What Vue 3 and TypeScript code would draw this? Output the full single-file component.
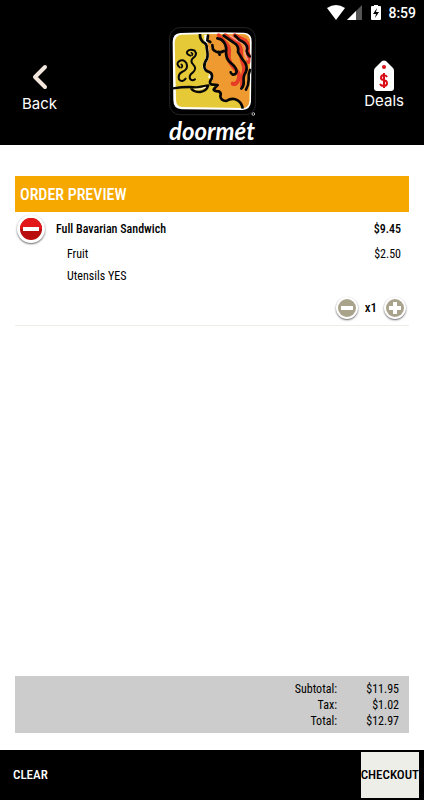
<script setup lang="ts">
import { computed, ref } from 'vue'

interface Line {
  name: string
  price?: number
}

const item = { name: 'Full Bavarian Sandwich', price: 9.45 }
const options: Line[] = [{ name: 'Fruit', price: 2.5 }, { name: 'Utensils YES' }]
const quantity = ref(1)
const present = ref(true)

const money = (value: number): string => '$' + value.toFixed(2)
const subtotal = computed(() => (present.value ? 11.95 * quantity.value : 0))
const tax = computed(() => Math.round(subtotal.value * 8.5) / 100)
const totals = computed(() => [
  { label: 'Subtotal:', value: subtotal.value },
  { label: 'Tax:', value: tax.value },
  { label: 'Total:', value: subtotal.value + tax.value },
])

function change(step: number) {
  quantity.value = Math.max(1, quantity.value + step)
}
</script>

<template>
  <div class="screen">
    <header class="header">
      <div class="status">
        <svg width="18" height="15" viewBox="0 0 18 15" aria-hidden="true">
          <path d="M0 3Q9-3 18 3L9 15Z" fill="#fff" />
        </svg>
        <svg class="signal" width="15" height="15" viewBox="0 0 15 15" aria-hidden="true">
          <path d="M15 0V15H0Z" fill="#555" />
          <path d="M9 6V15H0Z" fill="#fff" />
        </svg>
        <svg class="battery" width="10" height="15" viewBox="0 0 10 15" aria-hidden="true">
          <path d="M3 0H7V1H9Q10 1 10 2V14Q10 15 9 15H1Q0 15 0 14V2Q0 1 1 1H3Z" fill="#fff" />
          <path d="M6 3L2 9H5L4 13L8 7H5Z" fill="#000" />
        </svg>
        <span class="clock">8:59</span>
      </div>
      <nav class="nav">
        <a class="link back" href="#back">
          <svg width="16" height="26" viewBox="0 0 16 26" aria-hidden="true">
            <path d="M13 3L3 13L13 23" fill="none" stroke="#f3e6dd" stroke-width="4" stroke-linecap="round" stroke-linejoin="round" />
          </svg>
          <span>Back</span>
        </a>
        <div class="brand">
          <svg class="mark" width="90" height="90" viewBox="21 13 270 270" aria-hidden="true">
            <rect x="29" y="18" width="257" height="261" rx="30" fill="#000" stroke="#242424" stroke-width="3" />
            <path d="M61 34Q150 30 252 33Q277 35 275 61L273 240Q271 263 248 265L65 263Q40 262 40 236L38 60Q39 35 61 34Z" fill="#fff" />
            <path d="M64 39Q148 36 250 38Q270 39 270 60L268 238Q267 258 248 259L68 256Q48 255 48 234L44 62Q45 42 64 39Z" fill="#e6c936" />
            <path d="M145 38H251Q270 40 270 60L268 238Q267 258 248 259Q245 248 232 239Q216 229 203 238Q186 240 181 227Q184 216 179 211Q166 211 164 201Q173 193 171 188L155 181Q163 164 157 154L139 143Q136 137 140 124Q148 109 146 91Q139 67 145 38Z" fill="#ee9a31" />
            <path d="M137 40Q136 65 142 88Q145 108 135 123Q129 142 139 146M148 158Q151 158 149 170" fill="none" stroke="#fff" stroke-width="9" />
            <path d="M120 37Q119 51 129 61Q141 66 140 79Q145 100 141 111Q132 124 133 135Q134 148 148 151Q159 156 155 171Q146 182 153 188L173 190Q164 198 161 204Q164 210 177 209Q185 214 181 224Q183 237 199 238Q217 226 233 236Q246 244 248 261" fill="none" stroke="#050505" stroke-width="8" stroke-linejoin="round" />
            <g fill="none" stroke-linecap="round" stroke-linejoin="round">
              <g stroke="#e63d27" stroke-width="12">
                <path d="M176 41Q187 54 199 66Q209 77 207 93Q204 109 211 124Q223 140 233 151Q242 164 233 179Q226 190 218 186" />
                <path d="M196 41Q211 54 225 59Q245 71 243 94Q243 112 250 129Q255 139 249 160Q246 176 246 193" />
                <path d="M224 41Q239 50 256 57Q267 69 263 87Q268 103 265 121" />
              </g>
              <path d="M211 43Q230 58 247 63Q259 71 255 89Q253 98 263 114" stroke="#f8a098" stroke-width="4" />
              <g stroke="#080808" stroke-width="8">
                <path d="M172 50Q185 51 192 62Q201 76 198 93Q198 108 207 119L223 134Q235 149 226 157Q216 162 212 152" />
                <path d="M191 42Q209 55 221 63Q238 72 234 91Q240 101 248 114Q265 131 258 150Q249 163 251 179Q252 193 244 201" />
                <path d="M225 42Q237 56 251 62Q266 73 260 88Q262 98 269 104" />
                <path d="M270 145Q264 158 266 174Q266 190 258 204" />
                <path d="M144 42L142 56L151 61M157 70L159 83Q173 98 192 88M176 91L179 99" />
              </g>
              <path d="M59 137Q47 127 57 119Q69 110 79 124Q87 143 66 151Q53 158 57 173Q66 184 77 171" stroke="#080808" stroke-width="6" />
              <path d="M91 102Q77 97 82 89Q90 80 104 87Q114 100 98 110Q90 119 100 129Q112 140 98 153Q85 162 91 173Q98 179 105 173" stroke="#080808" stroke-width="6" />
              <path d="M94 93Q100 95 96 101M64 128Q70 133 64 138" stroke="#080808" stroke-width="5" />
              <path d="M39 200Q78 194 110 197L145 191Q140 208 120 211Q102 211 94 201" stroke="#080808" stroke-width="7" />
              <path d="M105 203Q125 204 136 197" stroke="#fff" stroke-width="3" />
            </g>
            <circle cx="280" cy="277" r="4" fill="none" stroke="#bbb" stroke-width="3" />
          </svg>
          <span class="wordmark">doormét</span>
        </div>
        <a class="link deals" href="#deals">
          <svg width="22" height="32" viewBox="0 0 22 32" aria-hidden="true">
            <path d="M9 1Q11 0 13 1L20 8Q21 9 21 11V28Q21 31 18 31H4Q1 31 1 28V11Q1 9 2 8Z" fill="#fff" />
            <circle cx="11" cy="7" r="2" fill="#d90c16" />
            <path d="M14 17Q13 15 11 15Q8 15 8 18Q8 20 11 20Q14 21 14 23Q14 26 11 26Q8 26 7 24M11 13V28" fill="none" stroke="#d90c16" stroke-width="2" />
          </svg>
          <span>Deals</span>
        </a>
      </nav>
    </header>

    <main class="main">
      <h1 class="title">ORDER PREVIEW</h1>
      <section v-if="present" class="order">
        <div class="row item">
          <button class="round" type="button" aria-label="Remove item" @click="present = false">
            <svg width="28" height="28" viewBox="0 0 28 28" aria-hidden="true">
              <circle cx="14" cy="14" r="11" fill="#b80c0d" />
              <path d="M3 14A11 11 0 0 1 25 14Z" fill="#e31619" />
              <rect x="6" y="12" width="16" height="4" fill="#fff" />
            </svg>
          </button>
          <span class="name">{{ item.name }}</span>
          <span>{{ money(item.price) }}</span>
        </div>
        <div v-for="option in options" :key="option.name" class="row option">
          <span class="name">{{ option.name }}</span>
          <span v-if="option.price">{{ money(option.price) }}</span>
        </div>
        <div class="quantity">
          <button class="round" type="button" aria-label="Decrease quantity" @click="change(-1)">
            <svg width="22" height="22" viewBox="0 0 22 22" aria-hidden="true">
              <circle cx="11" cy="11" r="9" fill="#aaa38c" />
              <path d="M5 11H17" stroke="#fff" stroke-width="4" />
            </svg>
          </button>
          <span class="count">x{{ quantity }}</span>
          <button class="round" type="button" aria-label="Increase quantity" @click="change(1)">
            <svg width="22" height="22" viewBox="0 0 22 22" aria-hidden="true">
              <circle cx="11" cy="11" r="9" fill="#aaa38c" />
              <path d="M5 11H17M11 5V17" stroke="#fff" stroke-width="4" />
            </svg>
          </button>
        </div>
      </section>
      <dl class="totals">
        <div v-for="line in totals" :key="line.label" class="total">
          <dt>{{ line.label }}</dt>
          <dd>{{ money(line.value) }}</dd>
        </div>
      </dl>
    </main>

    <footer class="footer">
      <button class="clear" type="button" @click="present = false">CLEAR</button>
      <button class="checkout" type="button">CHECKOUT</button>
    </footer>
  </div>
</template>

<style>
body {
  background: #fff;
}
</style>

<style scoped>
.screen {
  box-sizing: border-box;
  min-height: 100vh;
  display: flex;
  flex-direction: column;
  font-family: "Roboto Condensed", "Liberation Sans Narrow", Roboto, sans-serif;
  font-size: 12px;
  line-height: 16px;
  color: #000;
}
button {
  font: inherit;
  border: 0;
  cursor: pointer;
}
svg {
  display: block;
}
.header {
  background: #000;
  color: #fff;
}
.status {
  display: flex;
  align-items: center;
  justify-content: flex-end;
  height: 25px;
  padding-right: 8px;
}
.signal {
  margin-left: 2px;
}
.battery {
  margin: 0 7px 0 9px;
}
.clock {
  font: 500 14px/16px Roboto, sans-serif;
}
.nav {
  display: grid;
  grid-template-columns: 1fr auto 1fr;
  height: 120px;
}
.link {
  display: flex;
  flex-direction: column;
  align-items: center;
  color: #fff;
  text-decoration: none;
  font: 15px/18px Inter, sans-serif;
}
.back {
  justify-self: start;
  padding: 39px 0 0 22px;
  gap: 5px;
}
.deals {
  justify-self: end;
  padding: 35px 20px 0 0;
}
.brand {
  display: flex;
  flex-direction: column;
  align-items: center;
  padding-top: 1px;
}
.wordmark {
  font: italic 700 24px/30px Lato, sans-serif;
}
.main {
  flex: 1;
  display: flex;
  flex-direction: column;
  padding: 31px 15px 17px;
}
.title {
  margin: 0;
  padding: 1px 5px 0;
  background: #f7a800;
  color: #fff;
  font-size: 16px;
  line-height: 35px;
  font-weight: 500;
}
.order {
  border-bottom: 1px solid #eeeee6;
  padding: 3px 3px 6px 2px;
}
.row {
  display: flex;
  align-items: center;
  height: 22px;
  padding-right: 5px;
}
.name {
  flex: 1;
}
.item {
  height: 28px;
  gap: 11px;
  font-weight: 500;
}
.option {
  padding-left: 50px;
}
.round {
  display: grid;
  place-items: center;
  padding: 0;
  border-radius: 50%;
  background: #fff;
  box-shadow: 0 1px 2px #0009;
}
.quantity {
  display: flex;
  align-items: center;
  justify-content: flex-end;
  gap: 7px;
  padding-top: 10px;
}
.count {
  font-size: 13px;
  font-weight: 500;
}
.totals {
  margin: auto 0 0;
  padding: 5px 10px 4px;
  background: #ccc;
}
.total {
  display: flex;
  justify-content: flex-end;
}
dd {
  margin: 0;
  width: 62px;
  text-align: right;
}
.footer {
  display: flex;
  align-items: stretch;
  justify-content: space-between;
  height: 46px;
  padding: 2px 5px 2px 13px;
  background: #000;
  font-size: 13px;
  font-weight: 500;
}
.clear {
  padding: 0;
  background: transparent;
  color: #fff;
}
.checkout {
  padding: 0;
  background: #eeeee9;
  color: #000;
}
</style>
